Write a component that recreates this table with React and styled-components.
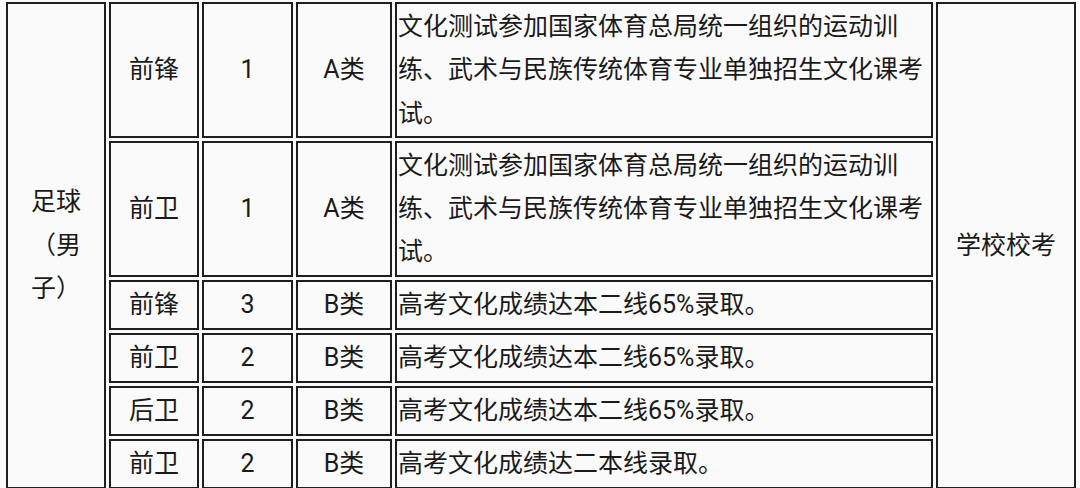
import React from "react";
import styled, { createGlobalStyle } from "styled-components";

const GlobalStyle = createGlobalStyle`
  html, body {
    margin: 0;
    padding: 0;
    background: #fafafa;
  }
  body {
    font-family: Roboto, "Noto Sans CJK SC", sans-serif;
    color: #1a1a1a;
  }
`;

const Table = styled.table`
  width: 1076px;
  margin: -1px 0 0 3px;
  table-layout: fixed;
  border-collapse: separate;
  border-spacing: 3px;
  font-size: 25px;
  line-height: 43.3px;
  text-spacing-trim: space-all;
`;

const Cell = styled.td`
  box-sizing: border-box;
  height: 50px;
  border: 2px solid #1e1e1e;
  padding: 1px;
  text-align: ${(p) => (p.$left ? "left" : "center")};
  vertical-align: middle;
  text-spacing-trim: space-all;
`;

const columns = [100, 90, 91, 96, 538, 140];

const ruleA =
  "文化测试参加国家体育总局统一组织的运动训练、武术与民族传统体育专业单独招生文化课考试。";

const rows = [
  { pos: "前锋", num: "1", kind: "A类", rule: ruleA },
  { pos: "前卫", num: "1", kind: "A类", rule: ruleA },
  { pos: "前锋", num: "3", kind: "B类", rule: "高考文化成绩达本二线65%录取。" },
  { pos: "前卫", num: "2", kind: "B类", rule: "高考文化成绩达本二线65%录取。" },
  { pos: "后卫", num: "2", kind: "B类", rule: "高考文化成绩达本二线65%录取。" },
  { pos: "前卫", num: "2", kind: "B类", rule: "高考文化成绩达二本线录取。" },
];

function App() {
  return (
    <>
      <GlobalStyle />
      <Table>
        <colgroup>
          {columns.map((w, i) => (
            <col key={i} style={{ width: w }} />
          ))}
        </colgroup>
        <tbody>
          {rows.map((r, i) => (
            <tr key={i}>
              {i === 0 && <Cell rowSpan={rows.length}>足球（男子）</Cell>}
              <Cell>{r.pos}</Cell>
              <Cell>{r.num}</Cell>
              <Cell>{r.kind}</Cell>
              <Cell $left>{r.rule}</Cell>
              {i === 0 && <Cell rowSpan={rows.length}>学校校考</Cell>}
            </tr>
          ))}
        </tbody>
      </Table>
    </>
  );
}

export default App;
